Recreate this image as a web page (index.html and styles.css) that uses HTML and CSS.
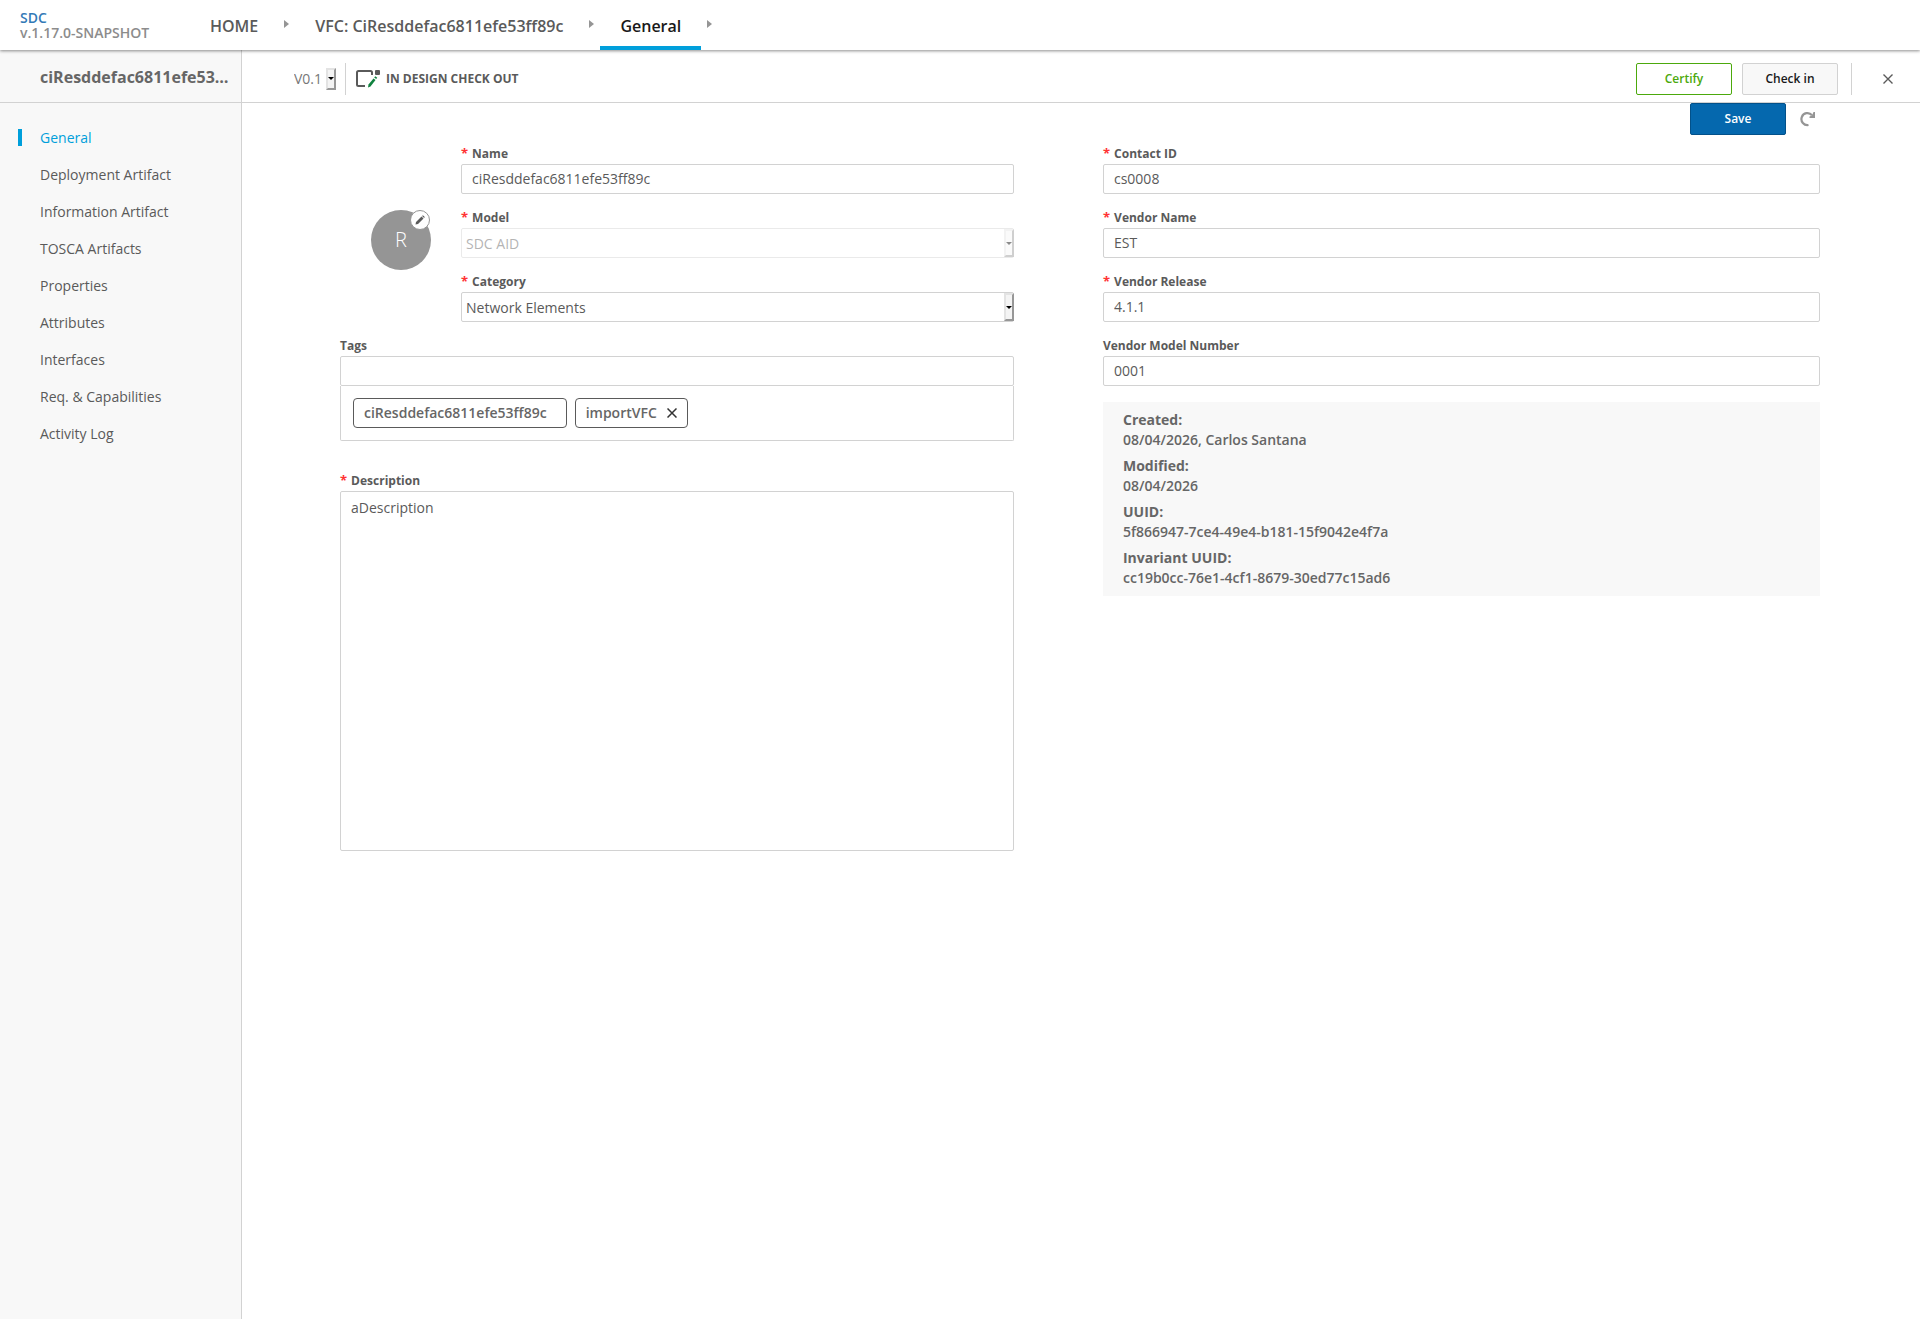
FILE: index.html
```
<!DOCTYPE html>
<html lang="en">
<head>
    <meta charset="UTF-8">
    <meta name="viewport" content="width=device-width, initial-scale=1.0">
    <title>SDC</title>
    <link rel="stylesheet" href="styles.css">
</head>
<body>
    <header class="top-nav">
        <div class="logo">
            <a href="#">SDC</a>
            <span class="version">v.1.17.0-SNAPSHOT</span>
        </div>
        <nav class="breadcrumbs">
            <a href="#" class="crumb">HOME</a>
            <span class="crumb-arrow"></span>
            <a href="#" class="crumb">VFC: CiResddefac6811efe53ff89c</a>
            <span class="crumb-arrow"></span>
            <a href="#" class="crumb selected">General</a>
            <span class="crumb-arrow"></span>
        </nav>
    </header>

    <div class="workspace">
        <aside class="sidebar">
            <div class="sidebar-title">ciResddefac6811efe53ff89c</div>
            <nav class="menu">
                <a href="#" class="menu-item selected">General</a>
                <a href="#" class="menu-item">Deployment Artifact</a>
                <a href="#" class="menu-item">Information Artifact</a>
                <a href="#" class="menu-item">TOSCA Artifacts</a>
                <a href="#" class="menu-item">Properties</a>
                <a href="#" class="menu-item">Attributes</a>
                <a href="#" class="menu-item">Interfaces</a>
                <a href="#" class="menu-item">Req. &amp; Capabilities</a>
                <a href="#" class="menu-item">Activity Log</a>
            </nav>
        </aside>

        <main class="main">
            <div class="toolbar">
                <div class="version-select select-box">
                    <select aria-label="Version">
                        <option>V0.1</option>
                    </select>
                    <span class="select-arrow"></span>
                </div>
                <div class="status">
                    <svg width="24" height="18" viewBox="0 0 24 18" aria-hidden="true">
                        <path d="M16 5V2.500Q16 1 14.500 1H2.500Q1 1 1 2.500V14.500Q1 16 2.500 16H9" fill="none" stroke="#5a5a5a" stroke-width="2"/>
                        <rect x="19" y="0" width="5" height="5" rx="1" fill="#5a5a5a"/>
                        <path d="M12 17.500L12.500 14.500L17.500 8.500L19.500 10L14.500 16.500Z" fill="#10823f"/>
                        <path d="M18.200 7.600L19.300 6.300L21.200 7.700L20.200 9.100Z" fill="#10823f"/>
                    </svg>
                    <span>IN DESIGN CHECK OUT</span>
                </div>
                <div class="actions">
                    <button type="button" class="btn btn-green">Certify</button>
                    <button type="button" class="btn btn-grey">Check in</button>
                    <span class="divider"></span>
                    <button type="button" class="icon-btn close-btn" aria-label="Close">
                        <svg width="10" height="10" viewBox="0 0 10 10"><path d="M0.500 0.500L9.500 9.500M9.500 0.500L0.500 9.500" stroke="#5a5a5a" stroke-width="1.400"/></svg>
                    </button>
                </div>
            </div>

            <form class="general">
                <div class="save-bar">
                    <button type="button" class="btn btn-blue">Save</button>
                    <button type="button" class="icon-btn" aria-label="Revert">
                        <svg width="16" height="16" viewBox="0 0 16 16">
                            <path d="M8.500 14A6 6 0 1 1 12 4.200" fill="none" stroke="#959595" stroke-width="2.200"/>
                            <path d="M13.500 1H15V7H9.500V5.500L12 4.500Z" fill="#959595"/>
                        </svg>
                    </button>
                </div>

                <div class="columns">
                    <div class="column">
                        <div class="identity">
                            <div class="avatar">
                                <span>R</span>
                                <button type="button" class="avatar-edit" aria-label="Edit icon">
                                    <svg width="10" height="10" viewBox="0 0 10 10"><path d="M0.500 9.500L1 7L6.500 1.500L8.500 3.500L3 9Z M7.100 0.900L7.900 0.200L9.800 2.100L9.100 2.900Z" fill="#5a5a5a"/></svg>
                                </button>
                            </div>
                            <div class="identity-fields">
                                <div class="field">
                                    <label for="name" class="required">Name</label>
                                    <input type="text" id="name" value="ciResddefac6811efe53ff89c">
                                </div>
                                <div class="field">
                                    <label for="model" class="required">Model</label>
                                    <div class="select-box disabled">
                                        <select id="model" disabled>
                                            <option>SDC AID</option>
                                        </select>
                                        <span class="select-arrow"></span>
                                    </div>
                                </div>
                                <div class="field">
                                    <label for="category" class="required">Category</label>
                                    <div class="select-box">
                                        <select id="category">
                                            <option>Network Elements</option>
                                        </select>
                                        <span class="select-arrow"></span>
                                    </div>
                                </div>
                            </div>
                        </div>

                        <div class="field tags">
                            <label for="tags">Tags</label>
                            <input type="text" id="tags">
                            <div class="tag-list">
                                <span class="tag locked">ciResddefac6811efe53ff89c</span>
                                <span class="tag">importVFC
                                    <button type="button" class="icon-btn" aria-label="Remove tag">
                                        <svg width="10" height="10" viewBox="0 0 10 10"><path d="M0.500 0.500L9.500 9.500M9.500 0.500L0.500 9.500" stroke="#333" stroke-width="1.500"/></svg>
                                    </button>
                                </span>
                            </div>
                        </div>

                        <div class="field">
                            <label for="description" class="required">Description</label>
                            <textarea id="description">aDescription</textarea>
                        </div>
                    </div>

                    <div class="column">
                        <div class="field">
                            <label for="contact" class="required">Contact ID</label>
                            <input type="text" id="contact" value="cs0008">
                        </div>
                        <div class="field">
                            <label for="vendorName" class="required">Vendor Name</label>
                            <input type="text" id="vendorName" value="EST">
                        </div>
                        <div class="field">
                            <label for="vendorRelease" class="required">Vendor Release</label>
                            <input type="text" id="vendorRelease" value="4.1.1">
                        </div>
                        <div class="field">
                            <label for="vendorModel">Vendor Model Number</label>
                            <input type="text" id="vendorModel" value="0001">
                        </div>
                        <dl class="meta">
                            <div>
                                <dt>Created:</dt>
                                <dd>08/04/2026, Carlos Santana</dd>
                            </div>
                            <div>
                                <dt>Modified:</dt>
                                <dd>08/04/2026</dd>
                            </div>
                            <div>
                                <dt>UUID:</dt>
                                <dd>5f866947-7ce4-49e4-b181-15f9042e4f7a</dd>
                            </div>
                            <div>
                                <dt>Invariant UUID:</dt>
                                <dd>cc19b0cc-76e1-4cf1-8679-30ed77c15ad6</dd>
                            </div>
                        </dl>
                    </div>
                </div>
            </form>
        </main>
    </div>
</body>
</html>
```
FILE: styles.css
```
* {
    box-sizing: border-box;
}
body {
    margin: 0;
    min-height: 100vh;
    display: flex;
    flex-direction: column;
    font-family: "Open Sans", sans-serif;
    font-size: 14px;
    line-height: 20px;
    color: #5a5a5a;
    background: #fff;
}
a {
    color: inherit;
    text-decoration: none;
}
input, select, textarea, button {
    font: inherit;
    color: inherit;
}
button {
    cursor: pointer;
}

/* top navigation */
.top-nav {
    position: relative;
    z-index: 1;
    display: flex;
    height: 50px;
    background: #fff;
    box-shadow: 0 1px 3px rgba(0, 0, 0, 0.45);
}
.logo {
    width: 190px;
    padding: 10px 0 0 20px;
    line-height: 15px;
    font-weight: 600;
}
.logo a {
    display: block;
    color: #337ab7;
}
.version {
    color: #8c8c8c;
}
.breadcrumbs {
    display: flex;
    align-items: center;
}
.crumb {
    height: 50px;
    padding: 0 20px;
    font-size: 16px;
    line-height: 52px;
    font-weight: 600;
    white-space: nowrap;
}
.crumb.selected {
    color: #191919;
    border-bottom: 4px solid #009fdb;
}
.crumb-arrow {
    margin: 0 6px 2px;
    border: 4px solid transparent;
    border-left: 5px solid #959595;
    border-right: 0;
}

/* sidebar */
.workspace {
    flex: 1;
    display: flex;
}
.sidebar {
    width: 242px;
    flex-shrink: 0;
    background: #f8f8f8;
    border-right: 1px solid #d2d2d2;
}
.sidebar-title {
    height: 53px;
    padding: 0 10px 0 40px;
    border-bottom: 1px solid #d2d2d2;
    font-size: 16px;
    line-height: 54px;
    font-weight: 700;
    color: #666;
    white-space: nowrap;
    overflow: hidden;
    text-overflow: ellipsis;
}
.menu {
    padding: 26px 0 0 18px;
    display: flex;
    flex-direction: column;
    gap: 20px;
}
.menu-item {
    padding-left: 18px;
    border-left: 4px solid transparent;
    line-height: 17px;
}
.menu-item.selected {
    color: #009fdb;
    border-left-color: #009fdb;
}

/* toolbar */
.main {
    flex: 1;
    min-width: 0;
}
.toolbar {
    display: flex;
    align-items: center;
    height: 53px;
    padding: 5px 21px 0 52px;
    border-bottom: 1px solid #d2d2d2;
}
.status {
    display: flex;
    align-items: center;
    gap: 6px;
    height: 32px;
    margin-left: 9px;
    padding-left: 10px;
    border-left: 1px solid #d2d2d2;
    font-size: 12px;
    font-weight: 700;
}
.actions {
    display: flex;
    align-items: center;
    gap: 10px;
    margin-left: auto;
}
.divider {
    height: 32px;
    margin: 0 15px 0 3px;
    border-left: 1px solid #d2d2d2;
}
.btn {
    width: 96px;
    height: 32px;
    padding: 0;
    border: 1px solid;
    border-radius: 2px;
    font-size: 12px;
    font-weight: 600;
}
.btn-green {
    color: #4ca90c;
    background: #fff;
    border-color: #4ca90c;
}
.btn-grey {
    color: #191919;
    background: #f8f8f8;
    border-color: #d2d2d2;
}
.btn-blue {
    color: #fff;
    background: #0568ae;
    border-color: #03518a;
}
.icon-btn {
    display: flex;
    padding: 0;
    border: 0;
    background: none;
}
.close-btn {
    padding: 6px;
}

/* form */
.general {
    padding: 0 100px 40px 98px;
}
.save-bar {
    display: flex;
    justify-content: flex-end;
    align-items: center;
    gap: 14px;
    padding-right: 4px;
    margin-bottom: 9px;
}
.columns {
    display: grid;
    grid-template-columns: 47fr 50fr;
    gap: 89px;
    align-items: start;
}
.column {
    min-width: 0;
}
.field {
    margin-bottom: 14px;
}
label {
    display: block;
    font-size: 12px;
    line-height: 20px;
    font-weight: 700;
}
.required::before {
    content: "*";
    margin-right: 4px;
    font-size: 13px;
    line-height: 16px;
    color: #f33;
}
input, textarea, select {
    display: block;
    width: 100%;
    height: 30px;
    margin: 0;
    padding: 0 10px 2px;
    border: 1px solid #d2d2d2;
    border-radius: 2px;
    background: #fff;
    outline: none;
}
textarea {
    height: 360px;
    padding: 6px 10px;
    resize: none;
}
.select-box {
    position: relative;
}
select {
    appearance: none;
    padding: 1px 14px 0 4px;
}
.disabled {
    opacity: 0.45;
}
select:disabled {
    opacity: 1;
}
/* raised button at the end of a drop-down */
.select-arrow {
    position: absolute;
    top: 1px;
    right: 0;
    bottom: 1px;
    width: 10px;
    display: flex;
    align-items: center;
    justify-content: center;
    border: 2px solid;
    border-color: #e3e3e3 #979797 #979797 #e3e3e3;
    background: #f4f4f4;
    pointer-events: none;
}
.select-arrow::before {
    content: "";
    border: 3px solid transparent;
    border-top-color: #000;
    border-bottom: 0;
}
.version-select {
    width: 42px;
    color: #777;
}
.version-select select {
    height: 24px;
    padding: 0;
    border: 0;
}

/* icon beside the first fields */
.identity {
    display: flex;
    align-items: center;
}
.identity-fields {
    flex: 1;
}
.avatar {
    position: relative;
    width: 60px;
    height: 60px;
    margin: 0 30px 0 31px;
    border-radius: 50%;
    background: #959595;
    color: #fff;
    font-size: 20px;
    line-height: 60px;
    font-weight: 300;
    text-align: center;
}
.avatar-edit {
    position: absolute;
    top: 0;
    right: 1px;
    display: flex;
    align-items: center;
    justify-content: center;
    width: 20px;
    height: 20px;
    padding: 0;
    border: 1px solid #959595;
    border-radius: 50%;
    background: #fff;
}

/* tags */
.tags {
    margin-bottom: 30px;
}
.tag-list {
    display: flex;
    flex-wrap: wrap;
    gap: 8px;
    padding: 12px;
    border: 1px solid #d2d2d2;
    border-top: 0;
    border-radius: 0 0 2px 2px;
}
.tag {
    display: flex;
    align-items: center;
    gap: 10px;
    height: 30px;
    padding: 0 10px;
    border: 1px solid #5a5a5a;
    border-radius: 4px;
    font-weight: 600;
    color: #666;
}
.tag.locked {
    padding-right: 19px;
}

.meta {
    margin: 16px 0 0;
    padding: 8px 20px;
    display: flex;
    flex-direction: column;
    gap: 6px;
    background: #f8f8f8;
    font-weight: 600;
    color: #666;
}
.meta dt {
    font-weight: 700;
}
.meta dd {
    margin: 0;
}
```
